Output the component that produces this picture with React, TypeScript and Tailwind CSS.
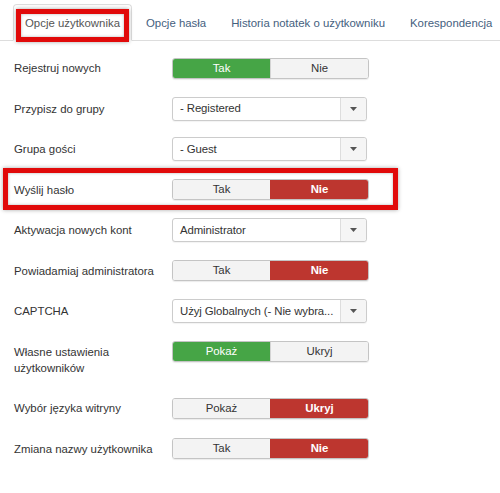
import React from "react";

type Field =
  | { kind: "toggle"; label: string; options: [string, string]; active: 0 | 1 }
  | { kind: "select"; label: string; value: string };

const fields: Field[] = [
  { kind: "toggle", label: "Rejestruj nowych", options: ["Tak", "Nie"], active: 0 },
  { kind: "select", label: "Przypisz do grupy", value: "- Registered" },
  { kind: "select", label: "Grupa gości", value: "- Guest" },
  { kind: "toggle", label: "Wyślij hasło", options: ["Tak", "Nie"], active: 1 },
  { kind: "select", label: "Aktywacja nowych kont", value: "Administrator" },
  { kind: "toggle", label: "Powiadamiaj administratora", options: ["Tak", "Nie"], active: 1 },
  { kind: "select", label: "CAPTCHA", value: "Użyj Globalnych (- Nie wybra..." },
  { kind: "toggle", label: "Własne ustawienia użytkowników", options: ["Pokaż", "Ukryj"], active: 0 },
  { kind: "toggle", label: "Wybór języka witryny", options: ["Pokaż", "Ukryj"], active: 1 },
  { kind: "toggle", label: "Zmiana nazwy użytkownika", options: ["Tak", "Nie"], active: 1 },
];

const tabs = ["Opcje użytkownika", "Opcje hasła", "Historia notatek o użytkowniku", "Korespondencja"];

const Toggle = ({ options, active }: { options: [string, string]; active: 0 | 1 }) => {
  return (
    <div className="flex h-[21px] w-[197px] rounded-[3px] overflow-hidden border border-[#c4c4c4] shadow-[0_1px_1px_rgba(0,0,0,0.08)]">
      {/* Left button */}
      <div
        className={
          active === 0
            ? "flex-1 flex items-center justify-center bg-[#46a546] text-white"
            : "flex-1 flex items-center justify-center bg-[#f3f3f3] text-[#333]"
        }>
        {options[0]}
      </div>
      {/* Right button */}
      <div
        className={
          active === 1
            ? "flex-1 flex items-center justify-center bg-[#bd362f] text-white font-bold border-l border-[#bd362f]"
            : "flex-1 flex items-center justify-center bg-[#f3f3f3] text-[#333] border-l border-[#d4d4d4]"
        }>
        {options[1]}
      </div>
    </div>
  );
};

const Select = ({ value }: { value: string }) => {
  return (
    <div className="flex h-[24px] w-[195px] rounded-[3px] border border-[#cccccc] bg-white shadow-[0_1px_1px_rgba(0,0,0,0.05)]">
      <div className="flex-1 min-w-0 flex items-center pl-[7px] pr-[2px] text-[#333] whitespace-nowrap tracking-[-0.1px]">
        {value}
      </div>
      <div className="w-[26px] flex items-center justify-center bg-[#f5f5f5] border-l border-[#dddddd] rounded-r-[3px]">
        <svg width="7" height="4" viewBox="0 0 7 4">
          <path d="M0 0h7L3.5 4z" fill="#555" />
        </svg>
      </div>
    </div>
  );
};

export default function App() {
  return (
    <div
      className="w-[500px] h-[493px] bg-white overflow-hidden text-[11.4px] text-[#333]"
      style={{ fontFamily: '"Liberation Sans", Arial, sans-serif' }}>
      {/* Tabs */}
      <div className="flex pt-[4px] pl-[13px] border-b border-[#dddddd]">
        {tabs.map((tab, i) => (
          <div
            key={tab}
            className={
              i === 0
                ? "relative mr-[2px] -mb-px px-[11px] py-[8.5px] leading-[18px] whitespace-nowrap border border-[#dddddd] border-b-white bg-white rounded-t-[4px] text-[#555]"
                : "relative mr-[1px] -mb-px px-[11px] py-[8.5px] leading-[18px] whitespace-nowrap border border-transparent text-[#44607e]"
            }>
            {tab}
            {i === 0 && (
              <div className="absolute top-[4px] left-[2px] right-[2px] bottom-[-2px] border-[5px] border-[#e10a0a] shadow-[0_0_4px_rgba(0,0,0,0.35),inset_0_0_3px_rgba(0,0,0,0.3)]" />
            )}
          </div>
        ))}
      </div>

      {/* Form */}
      <div className="pt-[7px] pl-[14px]">
        {fields.map((field) => (
          <div key={field.label} className="relative flex items-start py-[8.25px]">
            <div className="w-[158px] pr-[12px] pt-[4px] pb-[4px] leading-[16px]">{field.label}</div>
            <div className="h-[24px] flex items-center">
              {field.kind === "toggle" ? (
                <Toggle options={field.options} active={field.active} />
              ) : (
                <Select value={field.value} />
              )}
            </div>
            {field.label === "Wyślij hasło" && (
              <div className="absolute left-[-11px] w-[395px] top-[-2px] bottom-0 border-[5px] border-[#e10a0a] shadow-[0_0_4px_rgba(0,0,0,0.35),inset_0_0_3px_rgba(0,0,0,0.3)]" />
            )}
          </div>
        ))}
      </div>
    </div>
  );
}
